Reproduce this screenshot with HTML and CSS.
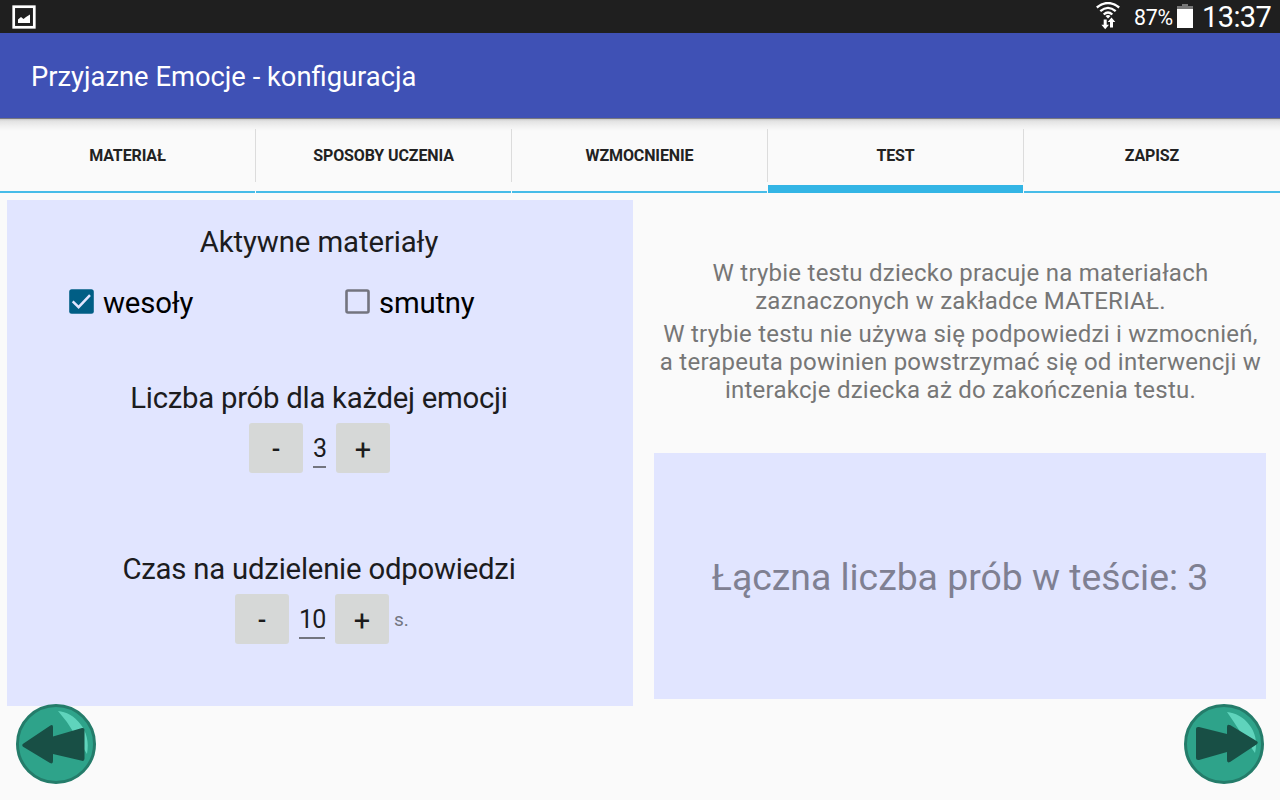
FILE: index.html
```html
<!DOCTYPE html>
<html lang="pl">
<head>
<meta charset="utf-8">
<title>Przyjazne Emocje - konfiguracja</title>
<link rel="stylesheet" href="styles.css">
</head>
<body>
<div class="status">
  <svg class="picture-icon" width="24" height="24" viewBox="0 0 24 24"><rect x="1.7" y="1.7" width="20.6" height="20.6" fill="none" stroke="#fff" stroke-width="2.700"/><path d="M6 18v-3.500l3-2.500 2.500 2 2.500-2 4-2.500V18z" fill="#fff"/></svg>
  <div class="status-right">
    <svg class="wifi" width="24" height="28" viewBox="0 0 24 28"><g fill="none" stroke="#fff" stroke-width="2.300"><path d="M.8 5.500Q12-3.500 23.200 5.500"/><path d="M4.300 9.200Q12 2.600 19.700 9.200"/><path d="M7.700 12.500Q12 8.500 16.300 12.500"/></g><path d="M9.500 14Q12 12 14.500 14L12 16.500z" fill="#fff"/><path d="M7.700 17.500h3v5.300h2.300L9.200 27.300 5.400 22.800h2.300zM14 25.500h3V20h2.300l-3.800-4.500L11.700 20H14z" fill="#fff"/></svg>
    <span class="percent">87%</span>
    <svg class="battery" width="16" height="24" viewBox="0 0 16 24"><path d="M5 0h6v2h5v3H0V2h5z" fill="#777"/><path d="M0 5h16v19H0z" fill="#fff"/></svg>
    <span class="clock">13:37</span>
  </div>
</div>
<header class="appbar"><h1>Przyjazne Emocje - konfiguracja</h1></header>
<nav class="tabs">
  <div class="tab"><span>MATERIAŁ</span></div>
  <div class="tab"><span>SPOSOBY UCZENIA</span></div>
  <div class="tab"><span>WZMOCNIENIE</span></div>
  <div class="tab active"><span>TEST</span></div>
  <div class="tab"><span>ZAPISZ</span></div>
</nav>
<main class="content">
  <section class="settings">
    <h2 class="t-materials">Aktywne materiały</h2>
    <div class="checks">
      <label class="check"><svg width="25" height="25" viewBox="0 0 25 25"><rect x=".2" y=".2" width="24.600" height="24.600" rx="2.500" fill="#005e85"/><path d="M3.700 12.300l5.900 5.800L21 6.200" fill="none" stroke="#e1e5ff" stroke-width="2.500"/></svg><span>wesoły</span></label>
      <label class="check"><svg width="25" height="25" viewBox="0 0 25 25"><rect x="1.500" y="1.500" width="22" height="22" rx="1.500" fill="none" stroke="#73747f" stroke-width="2.600"/></svg><span>smutny</span></label>
    </div>
    <h2 class="t-trials">Liczba prób dla każdej emocji</h2>
    <div class="stepper"><button>-</button><span class="value one">3</span><button class="plus">+</button></div>
    <h2 class="t-time">Czas na udzielenie odpowiedzi</h2>
    <div class="stepper seconds"><button>-</button><span class="value two">10</span><button class="plus">+</button><span class="unit">s.</span></div>
  </section>
  <section class="info">
    <div class="notes">
      <p>W trybie testu dziecko pracuje na materiałach<br>zaznaczonych w zakładce MATERIAŁ.</p>
      <p>W trybie testu nie używa się podpowiedzi i wzmocnień,<br>a terapeuta powinien powstrzymać się od interwencji w<br>interakcje dziecka aż do zakończenia testu.</p>
    </div>
    <div class="total"><span>Łączna liczba prób w teście: 3</span></div>
  </section>
</main>
<div class="pager">
  <svg width="80" height="80" viewBox="0 0 80 80"><circle cx="40" cy="40" r="38.500" fill="#2ea38a" stroke="#247c6a" stroke-width="3"/><path d="M42 7C58 8 76 26 71 50L58 29Q51 17 42 7z" fill="#5fd4bc"/><path d="M7.500 39.500L34 21.700Q37 20 37 23v9.500L66 24q2.500-.5 2.500 2v28.500q0 3-2.500 2.300L37 50v7q0 3.500-3 2L7.500 43q-2.500-1.800 0-3.500z" fill="#184f45"/></svg>
  <svg width="80" height="80" viewBox="0 0 80 80"><circle cx="40" cy="40" r="38.500" fill="#2ea38a" stroke="#247c6a" stroke-width="3"/><path d="M43 8C59 9 77 27 71 49L57 29Q50 18 43 8z" fill="#5fd4bc"/><path d="M72.500 37L46.500 21.300Q43 19.500 43 23v7L15 23q-3-.5-3 2v29q0 2.500 3 2L43 48v8q0 3.500 3 2L72.500 40.500q2.500-1.800 0-3.500z" fill="#184f45"/></svg>
</div>
</body>
</html>
```
FILE: styles.css
```css
* { box-sizing: border-box; }
body { margin: 0; width: 1280px; height: 800px; overflow: hidden; position: relative; background: #fafafa; color: #1c1c20; font-family: Roboto, sans-serif; }
h1, h2, p { margin: 0; font-weight: 400; white-space: nowrap; }
svg { display: block; flex: none; }
.status { height: 33px; background: #1f1f1f; color: #fff; display: flex; justify-content: space-between; padding: 0 8px 0 12px; }
.picture-icon { margin-top: 5px; }
.status-right { display: flex; line-height: 33px; }
.wifi { margin-top: 2px; margin-right: 14px; }
.percent { font-size: 21.300px; width: 43px; line-height: 36px; letter-spacing: -.2px; white-space: nowrap; }
.battery { margin-top: 4px; }
.clock { font-size: 29px; width: 70px; margin-left: 9px; letter-spacing: -.6px; line-height: 34px; white-space: nowrap; }
.appbar { height: 86px; background: #3f51b5; border-bottom: 1px solid #77777f; padding-left: 31px; color: #fff; }
.appbar h1 { font-size: 27.350px; line-height: 89px; height: 85px; }
.tabs { height: 74px; display: grid; grid-template-columns: repeat(5, 1fr); background: linear-gradient(#c9c9c9 0, #e2e2e2 2px, #f0f0f0 7px, #fafafa 12px); }
.tab { display: grid; grid-template-rows: 10px 53px 9px; margin-right: 1px; }
.tab span { grid-row: 2; display: block; text-align: center; font-size: 16px; font-weight: 700; letter-spacing: -.12px; line-height: 53px; color: #222; border-right: 1px solid #dcdcdc; margin-right: -1px; }
.tab:last-child { margin-right: 0; }
.tab:last-child span { border: 0; margin-right: 0; }
.tab::after { content: ""; grid-row: 3 / 5; height: 2px; background: #33b5e5; margin-top: 9px; opacity: .9; }
.tab.active::after { height: 8px; margin-top: 3px; opacity: 1; }
.content { display: flex; padding: 7px 14px 0 7px; gap: 21px; }
.settings { width: 626px; height: 506px; background: #e1e5ff; padding-top: 25px; }
.settings h2 { font-size: 29.330px; line-height: 34px; text-align: center; }
.settings .t-materials { letter-spacing: -.1px; padding-right: 2px; }
.settings .t-trials { letter-spacing: -.26px; padding-right: 2px; }
.settings .t-time { letter-spacing: -.22px; padding-right: 2px; }
.checks { display: flex; padding: 26px 0 0 62px; height: 122px; align-items: flex-start; }
.check { display: flex; width: 276px; gap: 9px; color: #000; font-size: 29.330px; line-height: 36px; letter-spacing: -.2px; }
.check svg { margin-top: 4px; }
.stepper { display: flex; justify-content: center; margin-top: 8px; height: 50px; margin-bottom: 79px; padding-right: 1px; font-size: 25px; }
.stepper.seconds { padding: 0 0 0 4px; }
.stepper button { width: 54px; height: 50px; border: 0; border-radius: 3px; background: #d6d8d7; padding: 0; font: 500 25px Roboto, sans-serif; line-height: 54px; color: #1c1c1c; }
.stepper .plus { font-size: 29px; font-weight: 400; line-height: 54px; }
.value { margin: 12px 10px 0; height: 33px; line-height: 28px; border-bottom: 2px solid #73757f; }
.one { width: 13px; letter-spacing: -.5px; }
.two { width: 26px; letter-spacing: -.8px; }
.unit { width: 15px; font-size: 19px; line-height: 52px; color: #73757f; margin-left: 5px; }
.info { width: 612px; }
.notes { height: 253px; padding: 59px 0 0 1px; margin: 0 -6px; text-align: center; font-size: 24px; letter-spacing: .245px; line-height: 28px; color: #767676; }
.notes p { margin-bottom: 5px; }
.total { height: 246px; background: #e1e5ff; color: #7f8092; font-size: 37.330px; line-height: 248px; text-align: center; white-space: nowrap; }
.pager { position: absolute; left: 16px; right: 16px; top: 704px; display: flex; justify-content: space-between; }
```
